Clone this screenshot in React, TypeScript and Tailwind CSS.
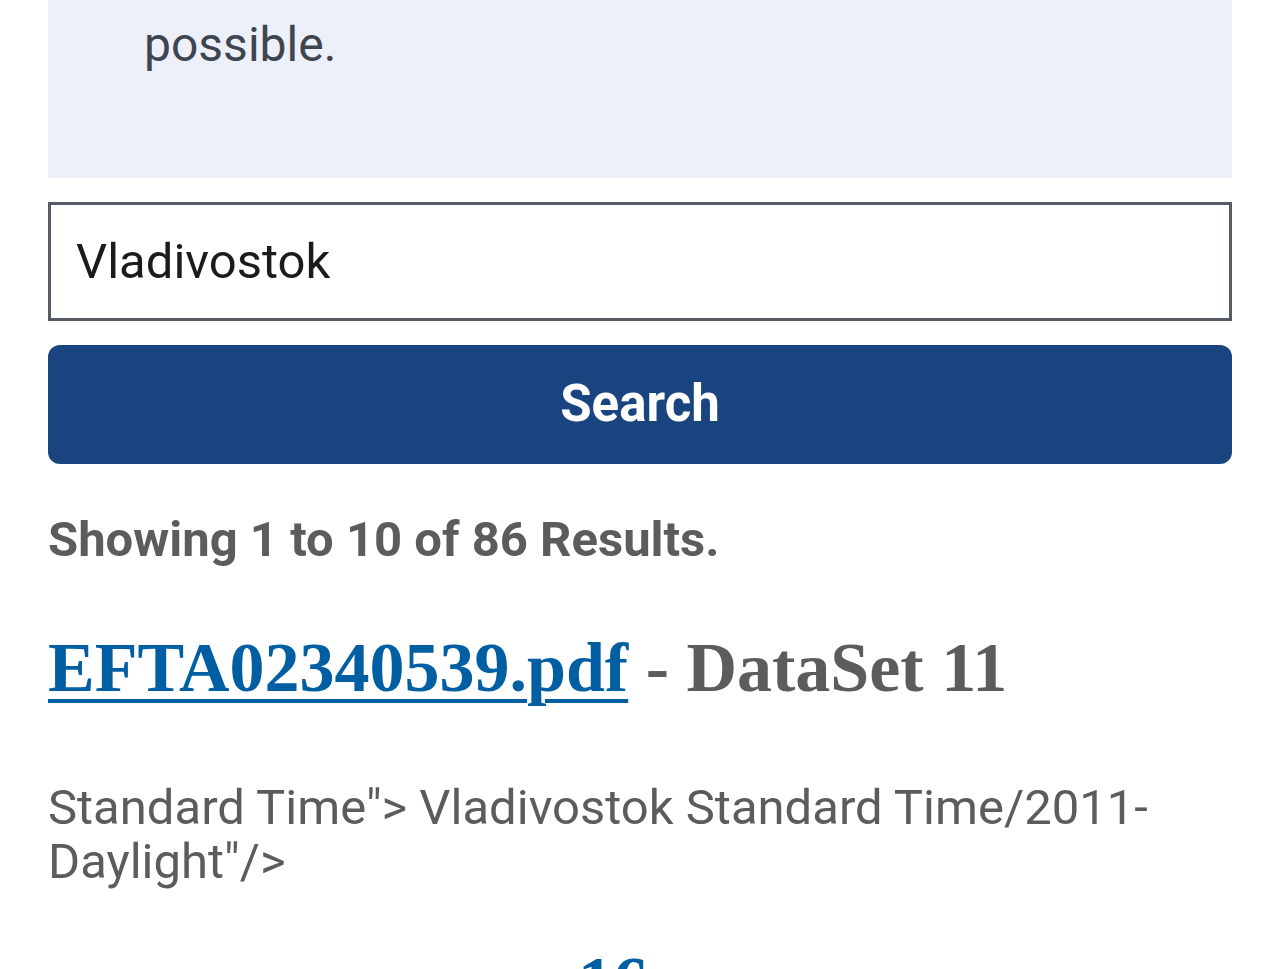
import React from "react";

const App = () => {
  return (
    <div className="h-[969px] overflow-hidden bg-white font-['Roboto','Liberation_Sans',sans-serif]">
      <div className="px-12">
        {/* Notice box */}
        <div className="-mt-[30px] bg-[#edf0f8] pl-24 pr-8 pb-[108px]">
          <p className="text-[48px] leading-[50px] text-[#3d4551]">
            <span className="invisible">qp</span>
            <br />
            possible.
          </p>
        </div>

        {/* Search form */}
        <form className="mt-6 flex flex-col gap-6" onSubmit={(e) => e.preventDefault()}>
          <input
            type="text"
            defaultValue="Vladivostok"
            className="h-[119px] w-full border-[3px] border-[#565c65] bg-white px-[25px] text-[49px] text-[#1b1b1b] outline-none"
          />
          <button
            type="submit"
            className="h-[119px] w-full rounded-xl bg-[#1a4480] text-[51px] font-bold text-white"
          >
            Search
          </button>
        </form>

        {/* Results */}
        <p className="mt-[46px] text-[49px] font-bold leading-[60px] text-[#5c5c5c]">
          Showing 1 to 10 of 86 Results.
        </p>

        <h2 className="mt-[58px] font-['Liberation_Serif',serif] text-[70px] font-bold leading-[80px] text-[#5c5c5c]">
          <a href="#" className="text-[#005ea2] underline decoration-[4px] underline-offset-[8px]">
            EFTA02340539.pdf
          </a>{" "}
          - DataSet 11
        </h2>

        <p className="mt-[73px] text-[49px] leading-[54px] text-[#5c5c5c]">
          Standard Time"&gt; Vladivostok Standard Time/2011-
          <br />
          Daylight"/&gt;
        </p>

        <p className="mt-[53px] pl-[530px] font-['Liberation_Serif',serif] text-[70px] font-bold leading-[80px] text-[#005ea2]">
          16
        </p>
      </div>
    </div>
  );
};

export default App;
